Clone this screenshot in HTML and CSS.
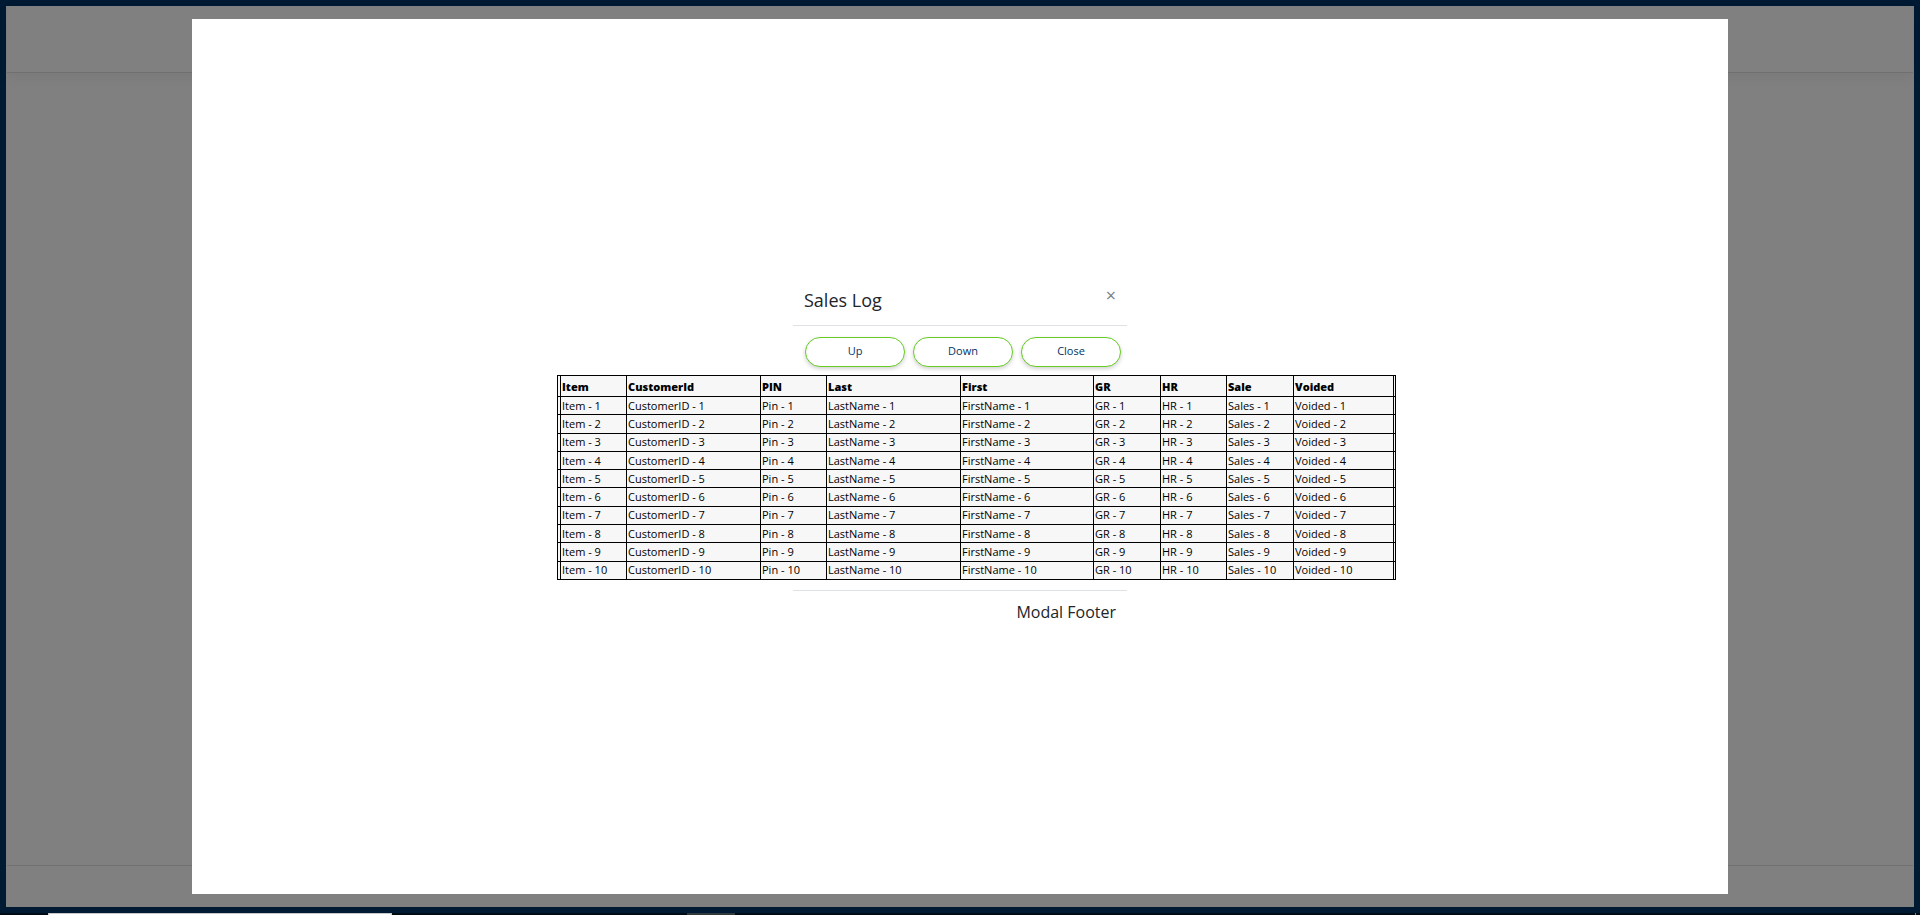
FILE: index.html
```html
<!DOCTYPE html>
<html lang="en">
<head>
<meta charset="utf-8">
<title>Sales Log</title>
<link rel="stylesheet" href="styles.css">
</head>
<body>
<div class="app">
  <div class="page">
    <div class="page-header"></div>
    <div class="page-main"></div>
    <div class="page-footer"></div>
  </div>
</div>
<div class="taskbar"><span class="task task-open"></span><span class="task task-idle"></span><span class="task-edge"></span></div>

<div class="modal" role="dialog" aria-labelledby="modal-title">
  <div class="modal-header">
    <h4 class="modal-title" id="modal-title">Sales Log</h4>
    <button class="modal-close" type="button" aria-label="Close dialog">×</button>
  </div>
  <div class="modal-body">
    <div class="actions">
      <button class="btn" type="button">Up</button>
      <button class="btn" type="button">Down</button>
      <button class="btn" type="button">Close</button>
    </div>
    <div class="table-wrap">
      <table class="log">
        <colgroup><col class="edge-left"><col class="narrow"><col class="wide"><col class="narrow"><col class="wide"><col class="name"><col class="code"><col class="narrow"><col class="code"><col class="medium"><col class="edge-right"></colgroup>
        <thead><tr><th></th><th>Item</th><th>CustomerId</th><th>PIN</th><th>Last</th><th>First</th><th>GR</th><th>HR</th><th>Sale</th><th>Voided</th><th></th></tr></thead>
        <tbody>
          <tr><td></td><td>Item - 1</td><td>CustomerID - 1</td><td>Pin - 1</td><td>LastName - 1</td><td>FirstName - 1</td><td>GR - 1</td><td>HR - 1</td><td>Sales - 1</td><td>Voided - 1</td><td></td></tr>
          <tr><td></td><td>Item - 2</td><td>CustomerID - 2</td><td>Pin - 2</td><td>LastName - 2</td><td>FirstName - 2</td><td>GR - 2</td><td>HR - 2</td><td>Sales - 2</td><td>Voided - 2</td><td></td></tr>
          <tr><td></td><td>Item - 3</td><td>CustomerID - 3</td><td>Pin - 3</td><td>LastName - 3</td><td>FirstName - 3</td><td>GR - 3</td><td>HR - 3</td><td>Sales - 3</td><td>Voided - 3</td><td></td></tr>
          <tr><td></td><td>Item - 4</td><td>CustomerID - 4</td><td>Pin - 4</td><td>LastName - 4</td><td>FirstName - 4</td><td>GR - 4</td><td>HR - 4</td><td>Sales - 4</td><td>Voided - 4</td><td></td></tr>
          <tr><td></td><td>Item - 5</td><td>CustomerID - 5</td><td>Pin - 5</td><td>LastName - 5</td><td>FirstName - 5</td><td>GR - 5</td><td>HR - 5</td><td>Sales - 5</td><td>Voided - 5</td><td></td></tr>
          <tr><td></td><td>Item - 6</td><td>CustomerID - 6</td><td>Pin - 6</td><td>LastName - 6</td><td>FirstName - 6</td><td>GR - 6</td><td>HR - 6</td><td>Sales - 6</td><td>Voided - 6</td><td></td></tr>
          <tr><td></td><td>Item - 7</td><td>CustomerID - 7</td><td>Pin - 7</td><td>LastName - 7</td><td>FirstName - 7</td><td>GR - 7</td><td>HR - 7</td><td>Sales - 7</td><td>Voided - 7</td><td></td></tr>
          <tr><td></td><td>Item - 8</td><td>CustomerID - 8</td><td>Pin - 8</td><td>LastName - 8</td><td>FirstName - 8</td><td>GR - 8</td><td>HR - 8</td><td>Sales - 8</td><td>Voided - 8</td><td></td></tr>
          <tr><td></td><td>Item - 9</td><td>CustomerID - 9</td><td>Pin - 9</td><td>LastName - 9</td><td>FirstName - 9</td><td>GR - 9</td><td>HR - 9</td><td>Sales - 9</td><td>Voided - 9</td><td></td></tr>
          <tr><td></td><td>Item - 10</td><td>CustomerID - 10</td><td>Pin - 10</td><td>LastName - 10</td><td>FirstName - 10</td><td>GR - 10</td><td>HR - 10</td><td>Sales - 10</td><td>Voided - 10</td><td></td></tr>
        </tbody>
      </table>
    </div>
  </div>
  <div class="modal-footer"><h5 class="footer-title">Modal Footer</h5></div>
</div>
</body>
</html>
```
FILE: styles.css
```css
* { box-sizing: border-box; }

body {
  margin: 0;
  height: 100vh;
  display: flex;
  flex-direction: column;
  overflow: hidden;
  background: #001a33;
  font-family: "Open Sans", "Noto Sans", sans-serif;
  color: #212529;
}

.app { flex: 1; display: flex; padding: 6px; }
.page { flex: 1; display: flex; flex-direction: column; background: #808080; padding: 0 1px; }
.page-header { height: 67px; border-bottom: 1px solid #707070; box-shadow: 0 4px 12px rgba(0, 0, 0, 0.06); }
.page-main { flex: 1; }
.page-footer { height: 42px; border-top: 1px solid #707070; }

.taskbar { height: 2px; display: flex; background: #000c14; padding: 0 4px 0 48px; }
.task-open { width: 344px; background: #ffffff; border: 1px solid #c8c8c8; border-bottom: 0; }
.task-idle { width: 48px; margin-left: 295px; background: #33383d; }
.task-edge { width: 1px; margin-left: auto; background: #808080; }

.modal {
  position: absolute;
  inset: 19px 10% 21px;
  display: flex;
  flex-direction: column;
  align-items: center;
  justify-content: center;
  background: #ffffff;
}

.modal-header {
  width: 334px;
  display: flex;
  justify-content: space-between;
  align-items: flex-start;
  padding: 5px 11px 13px;
  border-bottom: 1px solid #dee2e6;
}
.modal-title { margin: 0; font-size: 18px; line-height: 24px; font-weight: 500; }
.modal-close {
  border: 0;
  padding: 0;
  background: none;
  color: #7f7f7f;
  font: 400 18px/14px "Open Sans", sans-serif;
}

.modal-body { display: flex; flex-direction: column; align-items: center; padding: 11px 0 10px; }
.actions { display: flex; gap: 8px; padding-left: 6px; }
.btn {
  width: 100px;
  height: 30px;
  padding: 0 0 2px;
  border: 1px solid #6c2;
  border-radius: 15px;
  background: #ffffff;
  color: #003366;
  font: 400 11px/16px "Open Sans", sans-serif;
  box-shadow: 0 2px 4px rgba(0, 0, 0, 0.18);
}

.table-wrap { padding: 8px 0 0 33px; }
.log {
  table-layout: fixed;
  width: 839px;
  height: 205px;
  border-collapse: collapse;
  background: #f7f7f7;
  color: #000000;
  font-size: 11px;
  font-weight: 500;
  line-height: 16px;
}
.log th, .log td { padding: 0 0 0 1px; border: 1px solid #000000; text-align: left; white-space: nowrap; }
.log th { height: 21px; padding-top: 2px; font-weight: 800; }
.edge-left { width: 3px; }
.edge-right { width: 2px; }
.narrow { width: 66px; }
.code { width: 67px; }
.wide { width: 134px; }
.name { width: 133px; }
.medium { width: 100px; }

.modal-footer {
  width: 334px;
  display: flex;
  justify-content: flex-end;
  padding: 10px 11px 7px;
  border-top: 1px solid #dee2e6;
}
.footer-title { margin: 0; font-size: 16px; line-height: 22px; font-weight: 500; }
```
